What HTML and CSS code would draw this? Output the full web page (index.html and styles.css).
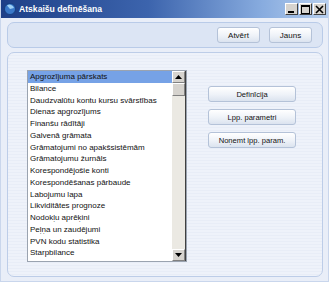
FILE: index.html
```html
<!DOCTYPE html>
<html lang="lv">
<head>
    <meta charset="UTF-8">
    <title>Atskaišu definēšana</title>
    <link rel="stylesheet" href="styles.css">
</head>
<body>
    <div class="window">
        <div class="titlebar">
            <svg class="app-icon" width="12" height="12" viewBox="0 0 12 12">
                <circle cx="6" cy="6" r="5.5" fill="#3a78c8"/>
                <path d="M3 2.5 A4.5 4.5 0 0 1 10 5 L6 6 Z" fill="#9fd0f5"/>
                <circle cx="6" cy="6" r="5.5" fill="none" stroke="#123a78" stroke-width="0.8"/>
            </svg>
            <span class="title">Atskaišu definēšana</span>
            <div class="win-buttons">
                <span class="win-btn"><svg width="9" height="9" viewBox="0 0 9 9"><rect x="1" y="6" width="6" height="2" fill="#000"/></svg></span>
                <span class="win-btn"><svg width="9" height="9" viewBox="0 0 9 9"><rect x="0.5" y="0.5" width="8" height="8" fill="none" stroke="#000"/><rect x="0" y="0" width="9" height="2" fill="#000"/></svg></span>
                <span class="win-btn"><svg width="9" height="9" viewBox="0 0 9 9"><path d="M1 1 L8 8 M8 1 L1 8" stroke="#000" stroke-width="1.6"/></svg></span>
            </div>
        </div>

        <div class="body">
            <div class="toolbar">
                <button class="btn tool-btn">Atvērt</button>
                <button class="btn tool-btn">Jauns</button>
            </div>

            <div class="panel">
                <div class="listbox">
                    <ul class="items">
                        <li class="selected">Apgrozījuma pārskats</li>
                        <li>Bilance</li>
                        <li>Daudzvalūtu kontu kursu svārstības</li>
                        <li>Dienas apgrozījums</li>
                        <li>Finanšu rādītāji</li>
                        <li>Galvenā grāmata</li>
                        <li>Grāmatojumi no apakšsistēmām</li>
                        <li>Grāmatojumu žurnāls</li>
                        <li>Korespondējošie konti</li>
                        <li>Korespondēšanas pārbaude</li>
                        <li>Labojumu lapa</li>
                        <li>Likviditātes prognoze</li>
                        <li>Nodokļu aprēķini</li>
                        <li>Peļņa un zaudējumi</li>
                        <li>PVN kodu statistika</li>
                        <li>Starpbilance</li>
                        <li>Vēsture</li>
                    </ul>
                    <div class="scrollbar">
                        <span class="sb-btn"><svg width="7" height="4" viewBox="0 0 7 4"><path d="M0 4 L3.5 0 L7 4 Z" fill="#000"/></svg></span>
                        <span class="sb-thumb"></span>
                        <span class="sb-track"></span>
                        <span class="sb-btn"><svg width="7" height="4" viewBox="0 0 7 4"><path d="M0 0 L3.5 4 L7 0 Z" fill="#000"/></svg></span>
                    </div>
                </div>

                <div class="actions">
                    <button class="btn side-btn">Definīcija</button>
                    <button class="btn side-btn">Lpp. parametri</button>
                    <button class="btn side-btn">Noņemt lpp. param.</button>
                </div>
            </div>
        </div>
    </div>
</body>
</html>
```

FILE: styles.css
```css
body {
    margin: 0;
    width: 329px;
    height: 282px;
    overflow: hidden;
    font-family: "Liberation Sans", Arial, sans-serif;
    font-size: 8px;
    background-color: #e9eef8;
}
.window {
    height: 282px;
    box-sizing: border-box;
    border-left: 1px solid #c9d6ec;
    border-right: 1px solid #c9d6ec;
    border-bottom: 1px solid #c9d6ec;
    background-color: #e9eef8;
}
.titlebar {
    height: 18px;
    display: flex;
    align-items: center;
    padding-left: 3px;
    background: linear-gradient(to right, #1e3f87 0%, #3c64ad 45%, #88acdf 80%, #b7cfee 100%);
}
.app-icon {
    margin-right: 3px;
}
.title {
    color: #fff;
    font-family: "Liberation Sans", Arial, sans-serif;
    font-weight: bold;
    font-size: 8.6px;
    flex: 1;
}
.win-buttons {
    display: flex;
    gap: 1px;
    margin-right: 2px;
}
.win-btn {
    width: 13px;
    height: 12px;
    box-sizing: border-box;
    display: flex;
    align-items: center;
    justify-content: center;
    background-color: #d6d3ce;
    border: 1px solid;
    border-color: #fff #404040 #404040 #fff;
}
.body {
    padding: 4px 5px 0 6px;
}
.toolbar {
    height: 26px;
    box-sizing: border-box;
    display: flex;
    justify-content: flex-end;
    align-items: center;
    gap: 9px;
    padding-right: 10px;
    background-color: #dce5f4;
    border: 1px solid #b9cbe8;
    border-radius: 7px;
}
.btn {
    font-family: "Liberation Sans", Arial, sans-serif;
    font-size: 8px;
    color: #111;
    padding: 0;
    border: 1px solid #b4c2d8;
    border-radius: 3px;
    background: linear-gradient(to bottom, #ffffff 0%, #eef2f8 55%, #dbe3ef 100%);
}
.tool-btn {
    width: 43px;
    height: 16px;
}
.panel {
    margin-top: 4px;
    height: 225px;
    box-sizing: border-box;
    display: flex;
    padding: 17px 0 0 19px;
    border: 1px solid #bdcde8;
    border-radius: 7px;
    background-color: #eef2fa;
    background-image: repeating-linear-gradient(to bottom, #eef2fa 0px, #eef2fa 2px, #e8edf7 2px, #e8edf7 3px);
}
.listbox {
    width: 160px;
    height: 192px;
    box-sizing: border-box;
    display: flex;
    background-color: #fff;
    border: 1px solid #9aa3b0;
    overflow: hidden;
}
.items {
    list-style: none;
    margin: 0;
    padding: 0;
    flex: 1;
    overflow: hidden;
}
.items li {
    height: 11.75px;
    line-height: 11.75px;
    padding-left: 2px;
    white-space: nowrap;
    color: #111;
}
.items .selected {
    background-color: #76a2e6;
}
.scrollbar {
    width: 13px;
    display: flex;
    flex-direction: column;
    background-color: #ebe9e3;
    border-right: 1px solid #404040;
}
.sb-btn,
.sb-thumb {
    height: 12px;
    box-sizing: border-box;
    display: flex;
    align-items: center;
    justify-content: center;
    background-color: #d6d3ce;
    border: 1px solid;
    border-color: #fff #808080 #808080 #fff;
}
.sb-thumb {
    height: 13px;
}
.sb-track {
    flex: 1;
}
.actions {
    display: flex;
    flex-direction: column;
    gap: 7px;
    margin-left: 21px;
    padding-top: 16px;
}
.side-btn {
    width: 88px;
    height: 16px;
    font-size: 7.6px;
}
```
